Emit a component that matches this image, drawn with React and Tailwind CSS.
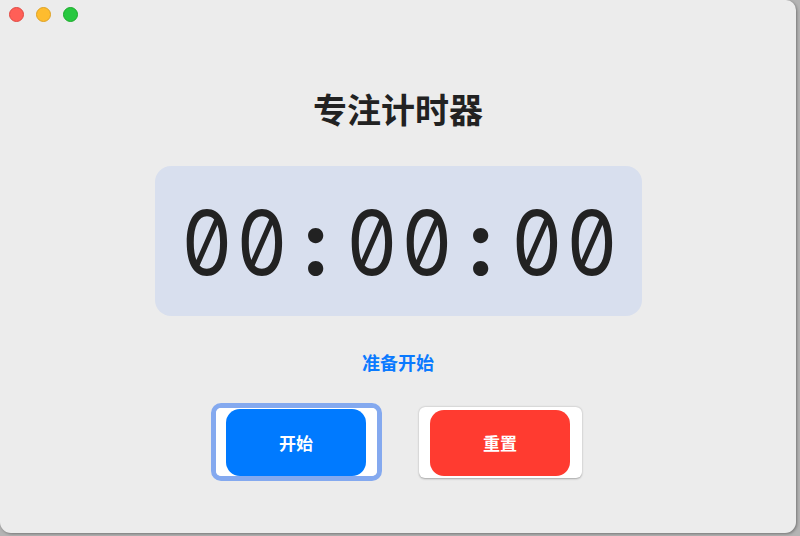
import React from "react";

const cjk = { fontFamily: '"Noto Sans CJK SC", "Noto Sans", sans-serif' };

const TrafficLights = () => (
  <div className="flex h-[28px] items-center gap-[12px] pl-[9px]">
    <span className="h-[15px] w-[15px] rounded-full bg-[#ff5f57] border border-[#e14942]" />
    <span className="h-[15px] w-[15px] rounded-full bg-[#febc2e] border border-[#dea123]" />
    <span className="h-[15px] w-[15px] rounded-full bg-[#28c840] border border-[#1aab29]" />
  </div>
);

const time = "00:00:00";

const App = () => {
  return (
    <div className="h-[536px] w-[800px] overflow-hidden bg-[#b4b4b4]" style={cjk}>
      <div className="h-[533px] w-[796px] rounded-b-[11px] rounded-tr-[10px] bg-[#ececec] shadow-[1px_1px_3px_rgba(0,0,0,0.35)]">
        <TrafficLights />
        <div className="flex flex-col items-center">
          <h1 className="mt-[60px] text-[34px] font-bold leading-[42px] text-[#222222]">
            专注计时器
          </h1>
          <div className="mt-[36px] flex h-[150px] w-[487px] items-center justify-center rounded-[16px] bg-[#d8dfee] pt-[3px]">
            <div
              className="flex text-[90px] leading-none text-[#222222]"
              style={{ fontFamily: "Inter, sans-serif", fontFeatureSettings: '"zero", "tnum"' }}
            >
              {time.split("").map((ch, i) =>
                ch === ":" ? (
                  <span key={i} className="inline-block w-[55px] text-center font-bold">
                    :
                  </span>
                ) : (
                  <span key={i} className="inline-block w-[55px] scale-x-[0.88] text-center font-normal">
                    {ch}
                  </span>
                )
              )}
            </div>
          </div>
          <p className="mt-[34px] text-[18px] font-bold leading-[24px] text-[#0a7aff]">
            准备开始
          </p>
          <div className="mt-[29px] flex items-center gap-[37px] pr-[3px]">
            <div className="rounded-[10px] border-[5px] border-[#84a9ef]">
              <div className="rounded-[5px] bg-white pl-[10px] pr-[11px] pt-[1px]">
                <button className="flex h-[67px] w-[140px] items-center justify-center rounded-[14px] bg-[#007aff] text-[17px] font-bold text-white">
                  开始
                </button>
              </div>
            </div>
            <div className="rounded-[6px] bg-white pb-[2px] pl-[11px] pr-[12px] pt-[3px] shadow-[0_0.5px_2px_rgba(0,0,0,0.3)]">
              <button className="flex h-[66px] w-[140px] items-center justify-center rounded-[14px] bg-[#ff3b30] text-[17px] font-bold text-white">
                重置
              </button>
            </div>
          </div>
        </div>
      </div>
    </div>
  );
};

export default App;
